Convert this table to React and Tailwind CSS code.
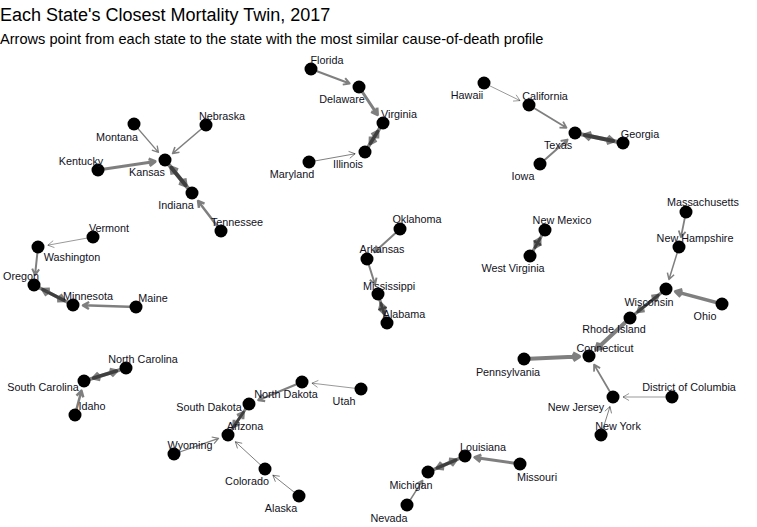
import React from 'react';

const nodes = {
    Florida: { p: [311, 69], l: [327, 60] },
    Delaware: { p: [359, 87], l: [342, 99] },
    Virginia: { p: [383, 123], l: [399, 114] },
    Illinois: { p: [365, 152], l: [348, 164] },
    Maryland: { p: [309, 162], l: [292, 174] },
    Hawaii: { p: [484, 83], l: [467, 95] },
    California: { p: [529, 105], l: [545, 96] },
    Texas: { p: [575, 133], l: [558, 145] },
    Georgia: { p: [623, 143], l: [640, 134] },
    Iowa: { p: [540, 164], l: [523, 176] },
    Montana: { p: [134, 124], l: [117, 137] },
    Nebraska: { p: [206, 125], l: [222, 116] },
    Kansas: { p: [165, 160], l: [147, 172] },
    Kentucky: { p: [98, 170], l: [81, 161] },
    Indiana: { p: [192, 193], l: [176, 205] },
    Tennessee: { p: [221, 231], l: [237, 222] },
    Vermont: { p: [93, 237], l: [109, 228] },
    Washington: { p: [38, 247], l: [72, 257] },
    Oregon: { p: [34, 285], l: [21, 276] },
    Minnesota: { p: [73, 305], l: [88, 296] },
    Maine: { p: [136, 307], l: [153, 298] },
    Oklahoma: { p: [400, 229], l: [417, 219] },
    Arkansas: { p: [367, 259], l: [382, 249] },
    Mississippi: { p: [378, 294], l: [389, 286] },
    Alabama: { p: [387, 323], l: [404, 314] },
    'New Mexico': { p: [545, 230], l: [562, 220] },
    'West Virginia': { p: [530, 256], l: [513, 268] },
    Massachusetts: { p: [686, 212], l: [703, 202] },
    'New Hampshire': { p: [679, 247], l: [695, 238] },
    Wisconsin: { p: [666, 289], l: [649, 302] },
    Ohio: { p: [722, 304], l: [705, 316] },
    'Rhode Island': { p: [630, 318], l: [614, 329] },
    Connecticut: { p: [589, 356], l: [605, 348] },
    Pennsylvania: { p: [524, 359], l: [508, 372] },
    'New Jersey': { p: [613, 397], l: [576, 407] },
    'District of Columbia': { p: [672, 397], l: [689, 387] },
    'New York': { p: [601, 435], l: [618, 426] },
    'North Carolina': { p: [126, 368], l: [143, 359] },
    'South Carolina': { p: [84, 381], l: [43, 387] },
    Idaho: { p: [75, 415], l: [92, 406] },
    'North Dakota': { p: [302, 382], l: [286, 394] },
    Utah: { p: [361, 389], l: [344, 401] },
    'South Dakota': { p: [249, 404], l: [209, 407] },
    Arizona: { p: [228, 435], l: [245, 426] },
    Wyoming: { p: [174, 454], l: [190, 445] },
    Colorado: { p: [265, 469], l: [247, 481] },
    Alaska: { p: [299, 496], l: [281, 508] },
    Louisiana: { p: [465, 456], l: [483, 447] },
    Missouri: { p: [520, 464], l: [537, 477] },
    Michigan: { p: [428, 472], l: [411, 485] },
    Nevada: { p: [407, 505], l: [389, 518] },
};

// from, to, width
const edges = [
    ['Florida', 'Delaware', 2],
    ['Delaware', 'Virginia', 3],
    ['Virginia', 'Illinois', 3.5],
    ['Illinois', 'Virginia', 3.5],
    ['Maryland', 'Illinois', 1],
    ['Hawaii', 'California', 0.8],
    ['California', 'Texas', 1.8],
    ['Texas', 'Georgia', 4],
    ['Georgia', 'Texas', 4],
    ['Iowa', 'Texas', 2],
    ['Montana', 'Kansas', 1.3],
    ['Nebraska', 'Kansas', 1.6],
    ['Kentucky', 'Kansas', 3],
    ['Kansas', 'Indiana', 4],
    ['Indiana', 'Kansas', 4],
    ['Tennessee', 'Indiana', 2.5],
    ['Vermont', 'Washington', 0.8],
    ['Washington', 'Oregon', 2],
    ['Oregon', 'Minnesota', 3.5],
    ['Minnesota', 'Oregon', 3.5],
    ['Maine', 'Minnesota', 2.5],
    ['Oklahoma', 'Arkansas', 2],
    ['Arkansas', 'Mississippi', 2],
    ['Mississippi', 'Alabama', 3],
    ['Alabama', 'Mississippi', 3],
    ['New Mexico', 'West Virginia', 3],
    ['West Virginia', 'New Mexico', 3],
    ['Massachusetts', 'New Hampshire', 1.8],
    ['New Hampshire', 'Wisconsin', 1.5],
    ['Ohio', 'Wisconsin', 3.5],
    ['Wisconsin', 'Rhode Island', 3],
    ['Rhode Island', 'Wisconsin', 3],
    ['Rhode Island', 'Connecticut', 4],
    ['Pennsylvania', 'Connecticut', 4],
    ['New Jersey', 'Connecticut', 1.8],
    ['District of Columbia', 'New Jersey', 0.8],
    ['New York', 'New Jersey', 1],
    ['North Carolina', 'South Carolina', 3.5],
    ['South Carolina', 'North Carolina', 3.5],
    ['Idaho', 'South Carolina', 2.5],
    ['Utah', 'North Dakota', 0.8],
    ['North Dakota', 'South Dakota', 2.2],
    ['South Dakota', 'Arizona', 3],
    ['Arizona', 'South Dakota', 3],
    ['Wyoming', 'Arizona', 1.2],
    ['Colorado', 'Arizona', 1],
    ['Alaska', 'Colorado', 1],
    ['Missouri', 'Louisiana', 3],
    ['Louisiana', 'Michigan', 3.5],
    ['Michigan', 'Louisiana', 3.5],
    ['Nevada', 'Michigan', 1.5],
];

function edgePath(from, to) {
    const [x1, y1] = nodes[from].p;
    const [x2, y2] = nodes[to].p;
    const dx = x2 - x1;
    const dy = y2 - y1;
    const len = Math.hypot(dx, dy);
    const ux = dx / len;
    const uy = dy / len;
    // stop short of the target node
    const ex = x2 - ux * 10;
    const ey = y2 - uy * 10;
    const head = 7;
    const a = Math.PI / 6;
    const c = Math.cos(a);
    const s = Math.sin(a);
    const h1x = ex - head * (ux * c - uy * s);
    const h1y = ey - head * (ux * s + uy * c);
    const h2x = ex - head * (ux * c + uy * s);
    const h2y = ey - head * (-ux * s + uy * c);
    return `M${x1} ${y1}L${ex} ${ey}M${h1x} ${h1y}L${ex} ${ey}L${h2x} ${h2y}`;
}

export default function App() {
    return (
        <div className="w-[757px] h-[527px] bg-white overflow-hidden flex flex-col" style={{ fontFamily: '"Liberation Sans", Arial, sans-serif' }}>
            <h1 className="pt-[4px] text-[18px] leading-[23px] text-black">Each State's Closest Mortality Twin, 2017</h1>
            <p className="mt-[3px] text-[14.6px] leading-[18px] text-black">Arrows point from each state to the state with the most similar cause-of-death profile</p>
            <svg width="757" height="479" viewBox="0 48 757 479" className="block">
                {/* edges */}
                {edges.map(([from, to, w], i) => (
                    <path
                        key={i}
                        d={edgePath(from, to)}
                        fill="none"
                        stroke="#000"
                        strokeOpacity="0.5"
                        strokeWidth={w}
                        strokeLinejoin="round"
                    />
                ))}
                {/* nodes */}
                {Object.entries(nodes).map(([name, n]) => (
                    <circle key={name} cx={n.p[0]} cy={n.p[1]} r="6.5" fill="#000" />
                ))}
                {/* labels */}
                {Object.entries(nodes).map(([name, n]) => (
                    <text
                        key={name}
                        x={n.l[0]}
                        y={n.l[1] + 4}
                        textAnchor="middle"
                        fontSize="10.8"
                        fill="#111122"
                        fontFamily='"Liberation Sans", Arial, sans-serif'
                    >
                        {name}
                    </text>
                ))}
            </svg>
        </div>
    );
}
